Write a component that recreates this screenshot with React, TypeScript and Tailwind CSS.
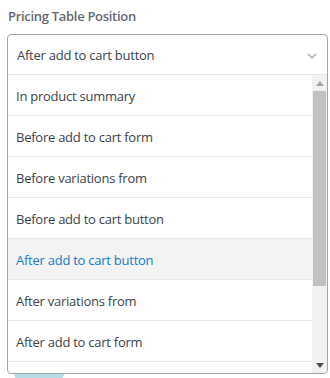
const options = [
  'In product summary',
  'Before add to cart form',
  'Before variations from',
  'Before add to cart button',
  'After add to cart button',
  'After variations from',
  'After add to cart form',
  '',
];

const selected = 'After add to cart button';

export default function App() {
  return (
    <div className="relative h-[378px] w-[330px] overflow-hidden bg-white font-['Open_Sans',sans-serif] text-[#3c434a]">
      <div className="px-[8px] pt-[6px] text-[13px] font-semibold leading-[20px] tracking-[-0.3px] text-[#646970]">
        Pricing Table Position
      </div>

      {/* select */}
      <div className="ml-[7px] mt-[8px] w-[321px] rounded-[4px] border border-[#9fa5ab] bg-white">
        <div className="flex h-[40px] items-center justify-between border-b border-[#e5e5e5] pl-[9px] pr-[10px] pt-[2px]">
          <span className="text-[13px] tracking-[-0.25px]">{selected}</span>
          <svg width="10" height="6" viewBox="0 0 10 6">
            <path d="M1 1l4 4 4-4" fill="none" stroke="#9aa0a6" strokeWidth="1.2" />
          </svg>
        </div>

        <div className="flex h-[298px] overflow-hidden rounded-b-[4px]">
          <ul className="flex-1">
            {options.map((opt, i) => (
              <li
                key={i}
                className={
                  opt === selected
                    ? 'flex h-[41px] items-center border-b border-[#e8e8e8] bg-[#f3f3f3] pl-[8px] pt-[3px] text-[13px] tracking-[-0.25px] text-[#1a7bc6]'
                    : 'flex h-[41px] items-center border-b border-[#e8e8e8] pl-[8px] pt-[3px] text-[13px] tracking-[-0.25px]'
                }
              >
                {opt}
              </li>
            ))}
          </ul>

          {/* scrollbar */}
          <div className="flex w-[15px] flex-col items-center bg-[#f1f1f1]">
            <div className="flex h-[16px] w-full items-center justify-center">
              <svg width="8" height="5" viewBox="0 0 8 5">
                <path d="M0 5L4 0l4 5z" fill="#a3a3a3" />
              </svg>
            </div>
            <div className="h-[195px] w-[13px] bg-[#c1c1c1]" />
            <div className="flex-1" />
            <div className="flex h-[16px] w-full items-center justify-center">
              <svg width="8" height="5" viewBox="0 0 8 5">
                <path d="M0 0l4 5 4-5z" fill="#505050" />
              </svg>
            </div>
          </div>
        </div>
      </div>

      <div className="ml-[14px] h-[6px] w-[50px] rounded-b-[6px] bg-[#b6dde3]" />
    </div>
  );
}
